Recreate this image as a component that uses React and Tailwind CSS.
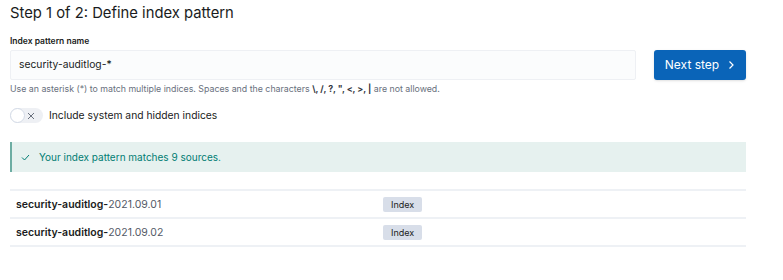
import React from "react";

const rows = ["2021.09.01", "2021.09.02"];

const App = () => {
  return (
    <div className="w-[783px] h-[280px] bg-white px-[10px] pt-[3px] font-['Inter',sans-serif] text-[#1a1c21] overflow-hidden">
      {/* Title */}
      <h1 className="text-[14.8px] leading-[20px] font-normal">Step 1 of 2: Define index pattern</h1>

      {/* Form row */}
      <div className="mt-[12px] flex items-end gap-[18px] w-[736px]">
        <div className="flex-1">
          <label className="block text-[8.5px] leading-[12px] font-semibold mb-[3px]">Index pattern name</label>
          <div className="h-[30px] bg-[#fbfcfd] border border-[#eef0f4] rounded-[2px] flex items-center px-[8px] text-[10.3px]">
            security-auditlog-*
          </div>
        </div>
        <button className="w-[92px] h-[30px] bg-[#0a64b8] rounded-[3px] text-white text-[12px] flex items-center justify-center gap-[8px] shadow-sm">
          Next step
          <svg width="8" height="10" viewBox="0 0 8 10" fill="none" stroke="currentColor" strokeWidth="1.2">
            <path d="M2.5 1.5 L6 5 L2.5 8.5" />
          </svg>
        </button>
      </div>

      <p className="mt-[3px] text-[8.8px] leading-[12px] text-[#69707d]">
        Use an asterisk (*) to match multiple indices. Spaces and the characters{" "}
        <span className="font-bold text-[#343741]">\, /, ?, ", &lt;, &gt;, |</span> are not allowed.
      </p>

      {/* Toggle */}
      <div className="mt-[13px] flex items-center gap-[6px]">
        <div className="relative w-[33px] h-[15px] rounded-full bg-[#eef0f4] flex items-center">
          <div className="absolute left-0 top-0 w-[15px] h-[15px] rounded-full bg-white border border-[#d3dae6]" />
          <svg className="absolute right-[8px]" width="8" height="8" viewBox="0 0 8 8" stroke="#69707d" strokeWidth="1">
            <path d="M1 1 L7 7 M7 1 L1 7" />
          </svg>
        </div>
        <span className="text-[10.3px]">Include system and hidden indices</span>
      </div>

      {/* Callout */}
      <div className="mt-[19px] w-[736px] h-[30px] bg-[#e6f1ef] border-l-[2px] border-[#6dada3] flex items-center pl-[9px] gap-[9px] text-[#017d73] text-[10px]">
        <svg width="9" height="7" viewBox="0 0 9 7" fill="none" stroke="currentColor" strokeWidth="1">
          <path d="M1 3.5 L3.5 6 L8 1" />
        </svg>
        Your index pattern matches 9 sources.
      </div>

      {/* Table */}
      <div className="mt-[17px] w-[736px] border-t-2 border-[#eef1f5]">
        {rows.map((r) => (
          <div key={r} className="h-[28px] border-b-2 border-[#eef1f5] flex items-center px-[6px] text-[10.5px]">
            <div className="w-[367px]">
              <span className="font-semibold">security-auditlog-</span>
              <span className="text-[#535966]">{r}</span>
            </div>
            <span className="bg-[#d8dee9] rounded-[2px] px-[8px] h-[15px] flex items-center text-[9px]">Index</span>
          </div>
        ))}
      </div>
    </div>
  );
};

export default App;
